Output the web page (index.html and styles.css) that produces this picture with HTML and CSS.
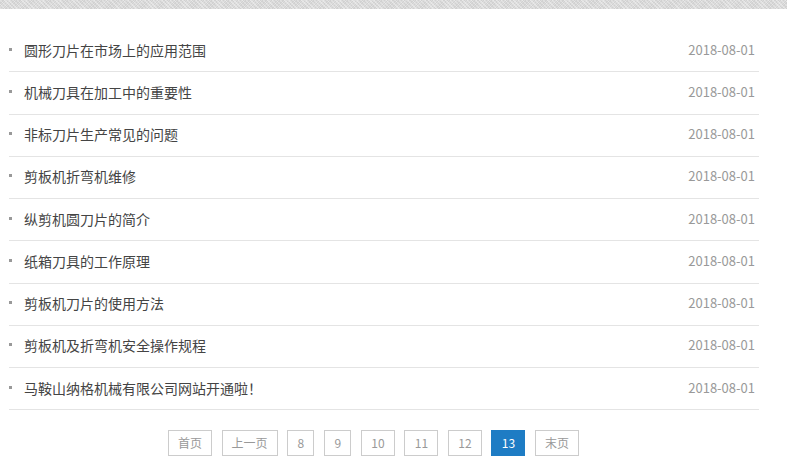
FILE: index.html
```html
<!DOCTYPE html>
<html lang="zh-CN">
<head>
<meta charset="utf-8">
<title>新闻列表</title>
<link rel="stylesheet" href="styles.css">
</head>
<body>
<div class="topbar"></div>
<ul class="news-list">
  <li class="news-item"><a class="news-title" href="#">圆形刀片在市场上的应用范围</a><span class="news-date">2018-08-01</span></li>
  <li class="news-item"><a class="news-title" href="#">机械刀具在加工中的重要性</a><span class="news-date">2018-08-01</span></li>
  <li class="news-item"><a class="news-title" href="#">非标刀片生产常见的问题</a><span class="news-date">2018-08-01</span></li>
  <li class="news-item"><a class="news-title" href="#">剪板机折弯机维修</a><span class="news-date">2018-08-01</span></li>
  <li class="news-item"><a class="news-title" href="#">纵剪机圆刀片的简介</a><span class="news-date">2018-08-01</span></li>
  <li class="news-item"><a class="news-title" href="#">纸箱刀具的工作原理</a><span class="news-date">2018-08-01</span></li>
  <li class="news-item"><a class="news-title" href="#">剪板机刀片的使用方法</a><span class="news-date">2018-08-01</span></li>
  <li class="news-item"><a class="news-title" href="#">剪板机及折弯机安全操作规程</a><span class="news-date">2018-08-01</span></li>
  <li class="news-item"><a class="news-title" href="#">马鞍山纳格机械有限公司网站开通啦！</a><span class="news-date">2018-08-01</span></li>
</ul>
<div class="pager">
  <a class="page-btn" href="#">首页</a>
  <a class="page-btn" href="#">上一页</a>
  <a class="page-btn num" href="#">8</a>
  <a class="page-btn num" href="#">9</a>
  <a class="page-btn num" href="#">10</a>
  <a class="page-btn num" href="#">11</a>
  <a class="page-btn num" href="#">12</a>
  <span class="page-btn num current">13</span>
  <a class="page-btn" href="#">末页</a>
</div>
</body>
</html>
```
FILE: styles.css
```css
html, body {
  margin: 0;
  padding: 0;
  background: #fff;
  font-family: "Noto Sans CJK SC", "Liberation Sans", sans-serif;
}

.topbar {
  height: 9px;
  background-color: #dcdcdc;
  background-image:
    repeating-linear-gradient(45deg, rgba(255,255,255,0.35) 0 1px, transparent 1px 3px),
    repeating-linear-gradient(-45deg, rgba(0,0,0,0.05) 0 1px, transparent 1px 2px);
}

.news-list {
  list-style: none;
  margin: 21px 0 0 9px;
  padding: 0;
  width: 750px;
}

.news-item {
  display: flex;
  align-items: center;
  justify-content: space-between;
  height: 41.25px;
  box-sizing: content-box;
  border-bottom: 1px solid #e4e4e4;
  padding-right: 4px;
}

.news-title {
  position: relative;
  padding-left: 15px;
  font-size: 14px;
  color: #444;
  text-decoration: none;
  line-height: 20px;
  margin-bottom: 2px;
}

.news-title::before {
  content: "";
  position: absolute;
  left: 0;
  top: 8px;
  width: 3px;
  height: 3px;
  background: #999;
}

.news-date {
  font-size: 13px;
  color: #999;
  line-height: 20px;
  margin-bottom: 2px;
}

.pager {
  display: flex;
  gap: 9.6px;
  padding-left: 168px;
  margin-top: 20px;
}

.page-btn {
  display: block;
  height: 24px;
  line-height: 24px;
  padding: 0 9px;
  border: 1px solid #cccccc;
  font-size: 12px;
  color: #999;
  text-decoration: none;
}

.page-btn.num {
  padding: 0 9.3px;
}

.page-btn.current {
  background: #1e7cc4;
  border-color: #1e7cc4;
  color: #fff;
}
```
